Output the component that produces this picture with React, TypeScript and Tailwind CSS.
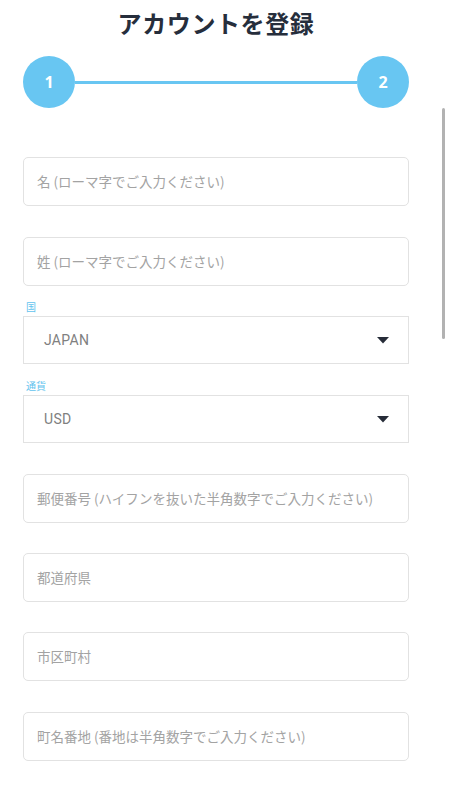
import React from 'react';

const jp = "font-['Noto_Sans_CJK_JP','Noto_Sans',sans-serif]";

interface FieldProps {
  placeholder: string;
  className?: string;
}

const TextField: React.FC<FieldProps> = ({ placeholder, className = '' }) => {
  return (
    <div
      className={`h-[49px] w-full rounded-[5px] border border-[#e2e2e2] bg-white flex items-center px-[13px] ${className}`}
    >
      <input
        type="text"
        placeholder={placeholder}
        className={`w-full bg-transparent outline-none text-[13.5px] leading-[18px] -mt-[2px] text-[#555] placeholder:text-[#a3a3a3] ${jp}`}
      />
    </div>
  );
};

interface SelectProps {
  label: string;
  value: string;
  className?: string;
}

const SelectField: React.FC<SelectProps> = ({ label, value, className = '' }) => {
  return (
    <div className={className}>
      <div className={`h-[14px] pl-[3px] text-[10px] leading-[14px] text-[#62c3ee] ${jp}`}>{label}</div>
      <div className="mt-[2px] h-[48px] w-full border border-[#e2e2e2] bg-white flex items-center justify-between pl-[20px] pr-[19px]">
        <span className="text-[14px] tracking-[0.3px] text-[#808080] font-['Roboto','Liberation_Sans',sans-serif]">
          {value}
        </span>
        <svg width="12" height="7" viewBox="0 0 12 7">
          <path d="M0 0 L12 0 L6 6.5 Z" fill="#262c38" />
        </svg>
      </div>
    </div>
  );
};

const Step: React.FC<{ n: number }> = ({ n }) => (
  <div className="w-[52px] h-[52px] shrink-0 rounded-full bg-[#68c6f2] flex items-center justify-center">
    <span className="text-white text-[16px] font-bold font-['Open_Sans','Liberation_Sans',sans-serif]">{n}</span>
  </div>
);

const App: React.FC = () => {
  return (
    <div className="relative min-h-screen w-[450px] h-[790px] overflow-hidden bg-white">
      <div className="mx-[23px] w-[386px]">
        <h1
          className={`pt-[7px] text-center text-[24px] leading-[32px] font-bold tracking-[0.6px] text-[#262e3c] ${jp}`}
        >
          アカウントを登録
        </h1>

        <div className="mt-[17px] flex items-center">
          <Step n={1} />
          <div className="flex-1 h-[3px] bg-[#68c6f2]" />
          <Step n={2} />
        </div>

        <div className="mt-[49px] flex flex-col">
          <TextField placeholder="名 (ローマ字でご入力ください)" />
          <TextField placeholder="姓 (ローマ字でご入力ください)" className="mt-[31px]" />
          <SelectField label="国" value="JAPAN" className="mt-[14px]" />
          <SelectField label="通貨" value="USD" className="mt-[15px]" />
          <TextField placeholder="郵便番号 (ハイフンを抜いた半角数字でご入力ください)" className="mt-[31px]" />
          <TextField placeholder="都道府県" className="mt-[30px]" />
          <TextField placeholder="市区町村" className="mt-[30px]" />
          <TextField placeholder="町名番地 (番地は半角数字でご入力ください)" className="mt-[31px]" />
        </div>
      </div>

      <div className="absolute left-[442px] top-[108px] w-[3px] h-[231px] rounded-full bg-[#b2b2b2]" />
    </div>
  );
};

export default App;
